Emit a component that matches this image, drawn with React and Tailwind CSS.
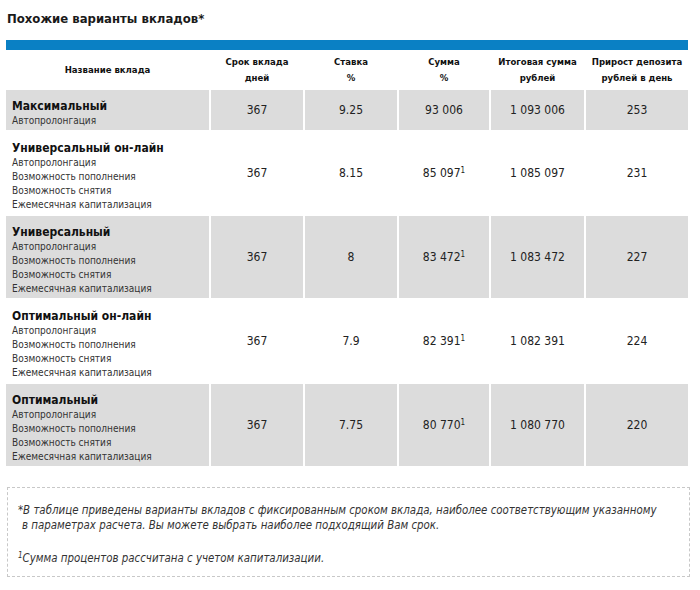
import React from 'react';

const cols = 'grid grid-cols-[203px_92px_92px_90px_93px_102px] gap-x-[2px]';

const features = [
  'Автопролонгация',
  'Возможность пополнения',
  'Возможность снятия',
  'Ежемесячная капитализация',
];

const deposits = [
  { name: 'Максимальный', opts: ['Автопролонгация'], term: '367', rate: '9.25', sum: '93 006', total: '1 093 006', daily: '253', cap: false },
  { name: 'Универсальный он-лайн', opts: features, term: '367', rate: '8.15', sum: '85 097', total: '1 085 097', daily: '231', cap: true },
  { name: 'Универсальный', opts: features, term: '367', rate: '8', sum: '83 472', total: '1 083 472', daily: '227', cap: true },
  { name: 'Оптимальный он-лайн', opts: features, term: '367', rate: '7.9', sum: '82 391', total: '1 082 391', daily: '224', cap: true },
  { name: 'Оптимальный', opts: features, term: '367', rate: '7.75', sum: '80 770', total: '1 080 770', daily: '220', cap: true },
];

const headers = [
  ['Название вклада'],
  ['Срок вклада', 'дней'],
  ['Ставка', '%'],
  ['Сумма', '%'],
  ['Итоговая сумма', 'рублей'],
  ['Прирост депозита', 'рублей в день'],
];

export default function App() {
  return (
    <div className="w-[700px] h-[590px] bg-white text-[#222] font-['DejaVu_Sans_Condensed','DejaVu_Sans',sans-serif] pt-[9px]">
      <h2 className="pl-[7px] text-[13px] font-bold leading-[20px] text-[#1a1a1a]">Похожие варианты вкладов*</h2>

      <div className="ml-[6px] w-[682px] mt-[11px]">
        <div className="h-[10px] bg-[#0a80c4]" />

        {/* header */}
        <div className={`${cols} h-[40px] items-center`}>
          {headers.map((h, i) => (
            <div key={i} className="text-center text-[9.5px] font-bold leading-[16px] text-[#111]">
              {h.map((l) => (
                <div key={l}>{l}</div>
              ))}
            </div>
          ))}
        </div>

        {/* rows */}
        <div className="flex flex-col gap-y-[2px]">
          {deposits.map((d, i) => {
            const bg = i % 2 === 0 ? 'bg-[#dcdcdc]' : 'bg-white';
            return (
              <div key={d.name} className={cols}>
                <div className={`${bg} px-[6px] pt-[8px] pb-[2px]`}>
                  <div className="text-[12px] font-bold leading-[16px] text-[#111]">{d.name}</div>
                  {d.opts.map((o) => (
                    <div key={o} className="text-[10px] leading-[14px] text-[#333]">{o}</div>
                  ))}
                </div>
                {[d.term, d.rate].map((v, k) => (
                  <div key={k} className={`${bg} flex items-center justify-center text-[12px] text-[#222]`}>{v}</div>
                ))}
                <div className={`${bg} flex items-center justify-center text-[12px] text-[#222]`}>
                  <span>
                    {d.sum}
                    {d.cap && <sup className="text-[8px]">1</sup>}
                  </span>
                </div>
                {[d.total, d.daily].map((v, k) => (
                  <div key={k} className={`${bg} flex items-center justify-center text-[12px] text-[#222]`}>{v}</div>
                ))}
              </div>
            );
          })}
        </div>
      </div>

      {/* footnote */}
      <div className="ml-[7px] mt-[21px] w-[683px] h-[90px] border border-dashed border-[#c8c8c8] pl-[10px] pt-[15px] text-[11.4px] italic leading-[15px] text-[#333]">
        <p>*В таблице приведены варианты вкладов с фиксированным сроком вклада, наиболее соответствующим указанному</p>
        <p className="pl-[4px]">в параметрах расчета. Вы можете выбрать наиболее подходящий Вам срок.</p>
        <p className="mt-[18px]">
          <sup className="text-[8px]">1</sup>Сумма процентов рассчитана с учетом капитализации.
        </p>
      </div>
    </div>
  );
}
